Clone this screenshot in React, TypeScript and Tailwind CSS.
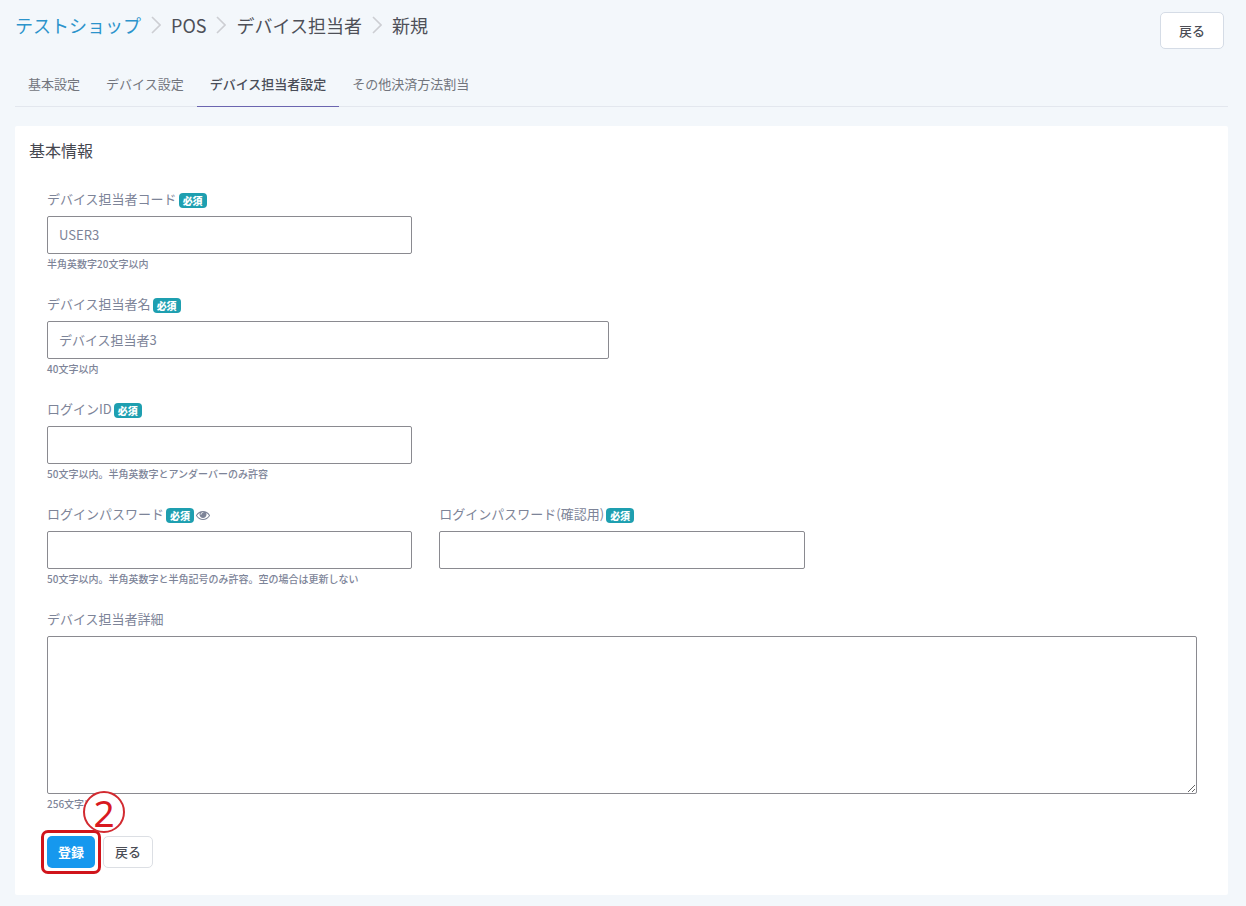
import type { ReactNode } from "react";

function Chevron() {
  return (
    <svg className="h-[18px] w-[10px] shrink-0" viewBox="0 0 10 18" fill="none" stroke="#cdced3" strokeWidth="1.6" aria-hidden="true">
      <path d="M1 1l8 8-8 8" />
    </svg>
  );
}

function EyeIcon() {
  return (
    <svg className="size-[14px]" viewBox="0 0 1792 1792" fill="currentColor" aria-hidden="true">
      <path d="M1664 960q-152-236-381-353 61 104 61 225 0 185-131.5 316.5t-316.5 131.5-316.5-131.5-131.5-316.5q0-121 61-225-229 117-381 353 133 205 333.5 326.5t434.5 121.5 434.5-121.5 333.5-326.5zm-720-384q0-20-14-34t-34-14q-125 0-214.5 89.5t-89.5 214.5q0 20 14 34t34 14 34-14 14-34q0-86 61-147t147-61q20 0 34-14t14-34zm848 384q0 34-20 69-140 230-376.5 368.5t-499.5 138.5-499.5-139-376.5-368q-20-35-20-69t20-69q140-229 376.5-368t499.5-139 499.5 139 376.5 368q20 35 20 69z" />
    </svg>
  );
}

function Required() {
  return <span className="rounded-[4px] bg-[#1e9fb0] px-1 text-[10px] leading-[15px] font-black text-white">必須</span>;
}

const inputClass =
  "block h-[38px] w-full rounded-[2px] border border-[#8a8a90] bg-white px-[11px] pb-[2px] text-[13px] text-[#7d8498] outline-none focus:border-[#1b9cf0]";

type FieldProps = {
  id: string;
  label: string;
  span: string;
  required?: boolean;
  help?: string;
  action?: ReactNode;
  children: ReactNode;
};

function Field({ id, label, span, required, help, action, children }: FieldProps) {
  return (
    <div className={span}>
      <div className="mb-[6px] flex h-5 items-center gap-[2px]">
        <label htmlFor={id} className="flex items-center gap-[2px] text-[13px] leading-5">
          <span className="pb-[2px]">{label}</span>
          {required && <Required />}
        </label>
        {action}
      </div>
      {children}
      {help && <p className="mt-[2px] text-[10px] leading-4 font-medium">{help}</p>}
    </div>
  );
}

const tabs = ["基本設定", "デバイス設定", "デバイス担当者設定", "その他決済方法割当"];

export default function App() {
  return (
    <div className="min-h-screen bg-[#f3f7fb] pr-[18px] pb-[11px] pl-[15px] font-['Noto_Sans_CJK_JP',sans-serif] text-[#7d8498]">
      <header className="flex items-start justify-between pt-3 pr-1">
        <nav aria-label="パンくず" className="-mt-px flex items-center gap-[10px] text-[18px] leading-7 text-[#4e5058]">
          <a href="#shop" className="text-[#2b93cb]">テストショップ</a>
          <Chevron />
          <span>POS</span>
          <Chevron />
          <span>デバイス担当者</span>
          <Chevron />
          <span>新規</span>
        </nav>
        <button type="button" className="h-[37px] rounded-[5px] border border-[#d5dce6] bg-white px-[18px] text-[13px] font-medium text-[#4b4d55]">
          戻る
        </button>
      </header>

      <nav aria-label="設定" className="mt-[13px] flex border-b border-[#e3e7ee] text-[13px] leading-5">
        {tabs.map((tab, i) => (
          <a
            key={tab}
            href={`#tab${i + 1}`}
            className={
              i === 2
                ? "-mb-px border-b border-[#6b65b0] px-[13px] pt-3 pb-3 font-medium text-[#4a4d58]"
                : "px-[13px] pt-3 pb-3 text-[#72757d]"
            }
          >
            {tab}
          </a>
        ))}
      </nav>

      <main className="mt-[19px] rounded-[2px] bg-white pt-3 pb-[27px]">
        <h1 className="px-[14px] text-[16px] leading-6 text-[#45474f]">基本情報</h1>
        <form className="mt-7 pr-[31px] pl-8" onSubmit={(e) => e.preventDefault()}>
          <div className="grid grid-cols-12 gap-x-[27px] gap-y-[23px]">
            <Field id="code" label="デバイス担当者コード" span="col-span-4" required help="半角英数字20文字以内">
              <input id="code" type="text" defaultValue="USER3" className={inputClass} />
            </Field>
            <Field id="name" label="デバイス担当者名" span="col-start-1 col-span-6" required help="40文字以内">
              <input id="name" type="text" defaultValue="デバイス担当者3" className={inputClass} />
            </Field>
            <Field id="login" label="ログインID" span="col-start-1 col-span-4" required help="50文字以内。半角英数字とアンダーバーのみ許容">
              <input id="login" type="text" className={inputClass} />
            </Field>
            <Field
              id="password"
              label="ログインパスワード"
              span="col-start-1 col-span-4"
              required
              help="50文字以内。半角英数字と半角記号のみ許容。空の場合は更新しない"
              action={
                <button type="button" aria-label="パスワードを表示">
                  <EyeIcon />
                </button>
              }
            >
              <input id="password" type="password" className={inputClass} />
            </Field>
            <Field id="confirm" label="ログインパスワード(確認用)" span="col-span-4" required>
              <input id="confirm" type="password" className={inputClass} />
            </Field>
            <Field id="detail" label="デバイス担当者詳細" span="col-span-12" help="256文字以内">
              <textarea
                id="detail"
                className="block h-[158px] w-full rounded-[2px] border border-[#8a8a90] bg-white px-[11px] py-2 text-[13px] outline-none focus:border-[#1b9cf0]"
              />
            </Field>
          </div>

          <div className="mt-6 flex gap-2">
            <div className="relative">
              <button type="submit" className="h-8 rounded-[5px] bg-[#1698ee] px-[11px] text-[13px] font-bold text-white">
                登録
              </button>
              <span className="pointer-events-none absolute -inset-[6px] rounded-[7px] border-[3px] border-[#d0141b]" />
              <span className="pointer-events-none absolute -top-[45px] left-[36px] flex size-[42px] items-center justify-center rounded-full border-2 border-[#d22a30] bg-white font-['Noto_Sans',sans-serif] text-[37px] leading-none text-[#d8191f]">
                2
              </span>
            </div>
            <button type="button" className="h-8 rounded-[5px] border border-[#dcdfe4] bg-white px-[11px] text-[13px] font-medium text-[#4b4d55]">
              戻る
            </button>
          </div>
        </form>
      </main>
    </div>
  );
}
